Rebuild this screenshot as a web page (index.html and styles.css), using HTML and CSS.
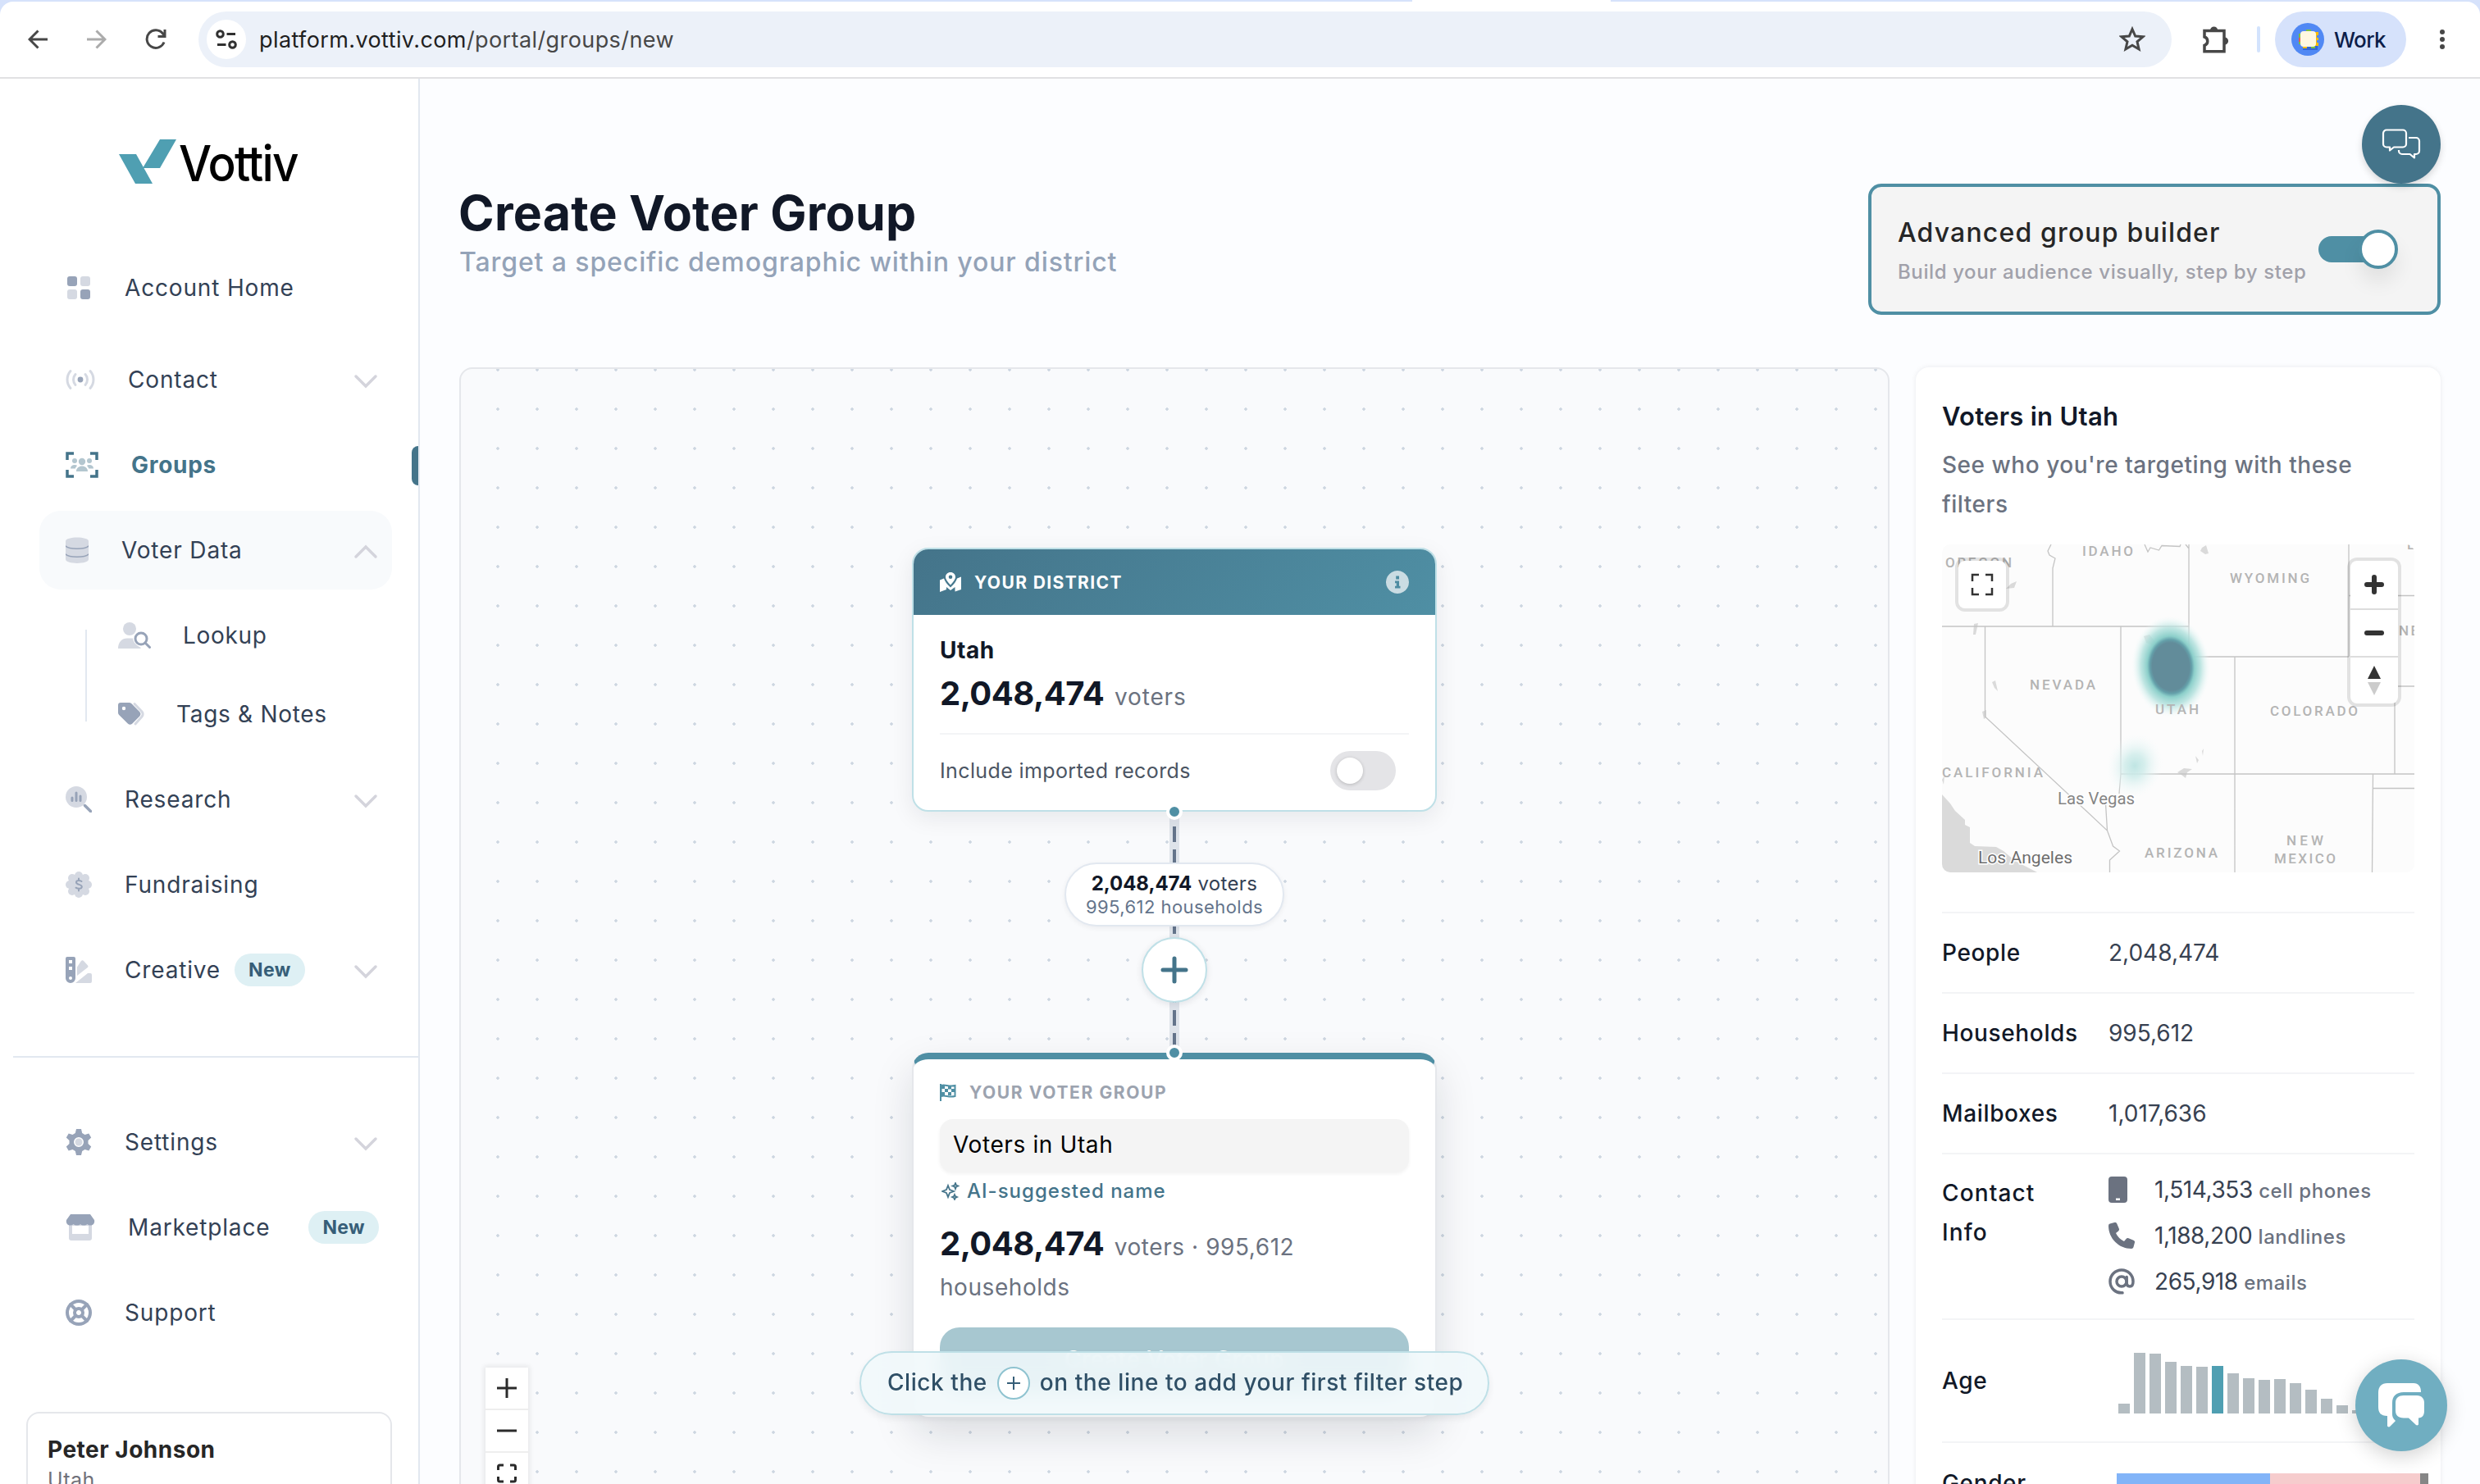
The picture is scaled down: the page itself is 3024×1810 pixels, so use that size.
FILE: index.html
```html
<!DOCTYPE html>
<html lang="en">
<head>
  <meta charset="UTF-8">
  <title>Create Voter Group</title>
  <link rel="stylesheet" href="styles.css">
</head>
<body>

  <!-- Browser toolbar -->
  <div class="browser">
    <div class="tab"></div>
    <div class="toolbar">
      <svg class="tool back" width="24" height="24" viewBox="0 0 24 24"><path d="M24 12H2M12.500 1.500 2 12l10.500 10.500"/></svg>
      <svg class="tool forward" width="24" height="24" viewBox="0 0 24 24"><path d="M0 12h22M11.500 1.500 22 12 11.500 22.500"/></svg>
      <svg class="tool reload" width="26" height="26" viewBox="0 0 26 26"><path d="M23 16.500A10.800 10.800 0 1 1 21.500 6L24 9M24 1v8.500h-8.500"/></svg>
      <div class="address">
        <span class="site-info">
          <svg width="26" height="24" viewBox="0 0 26 24"><circle cx="5.500" cy="5.500" r="3.800"/><path d="M13.500 5.500H24M2 18.500h10.500"/><circle cx="20.500" cy="18.500" r="3.800"/></svg>
        </span>
        <span class="url"><b>platform.vottiv.com</b>/portal/groups/new</span>
        <svg class="star" width="32" height="32" viewBox="0 0 32 32"><path d="M16 3.500 19.700 12l9.300.800-7 6.100 2.100 9.100L16 23.200 7.900 28 10 18.900l-7-6.100 9.300-.800z"/></svg>
      </div>
      <svg class="puzzle" width="34" height="34" viewBox="0 0 34 34"><path d="M4 6.500h24v25.300H4v-7.500a5.400 5.400 0 0 0 0-10.300z"/><path class="knob" d="M11 6a4.600 4.600 0 0 1 9.200 0zM28.500 14.500a4.600 4.600 0 0 1 0 9.200z"/></svg>
      <span class="bar-sep"></span>
      <div class="profile">
        <svg width="40" height="40" viewBox="0 0 40 40"><circle cx="20" cy="20" r="20" fill="#5088f4"/><path fill="#3367d6" d="M14 28h18v5H14z"/><path fill="#e8604c" d="M9 18h4v5H9z"/><path fill="#7ac043" d="M9 13h4v5H9zM9 23h4v3H9zM18 8h6v4h-6zM24 28h5v3h-5z"/><path fill="#fbbc04" d="M28 11h5v4h-2v3h2v3h-2v3h2v4h-5zM14 28h5v3h-5z"/><rect x="11" y="10" width="19" height="19" rx="4" fill="#fff8e1"/></svg>
        <span>Work</span>
      </div>
      <svg class="dots" width="8" height="26" viewBox="0 0 8 26"><circle cx="4" cy="4" r="3"/><circle cx="4" cy="13" r="3"/><circle cx="4" cy="22" r="3"/></svg>
    </div>
  </div>

  <div class="app">

    <!-- Sidebar -->
    <aside class="sidebar">
      <svg class="logo" width="222" height="60" viewBox="0 0 222 60">
        <path fill="#4f9fb2" d="M0 21h21l20 36H20zM50 3h20L50 38H29z"/>
        <text x="73" y="54" textLength="145" lengthAdjust="spacingAndGlyphs">Vottiv</text>
      </svg>

      <nav class="nav">
        <a class="nav-item first">
          <svg width="32" height="32" viewBox="0 0 32 32"><rect class="dark" x="2" y="2" width="12" height="12" rx="3"/><rect class="light" x="18" y="2" width="12" height="12" rx="3"/><rect class="light" x="2" y="18" width="12" height="12" rx="3"/><rect class="dark" x="18" y="18" width="12" height="12" rx="3"/></svg>
          <span class="label">Account Home</span>
        </a>
        <a class="nav-item">
          <svg width="36" height="32" viewBox="0 0 36 32"><circle class="dark" cx="18" cy="16" r="3.400"/><path class="light-line" d="M6 5.500c-5.300 6-5.300 15 0 21M12 9.500c-3.300 3.600-3.300 9.400 0 13M24 9.500c3.300 3.600 3.300 9.400 0 13M30 5.500c5.300 6 5.300 15 0 21"/></svg>
          <span class="label">Contact</span>
          <svg class="chevron" width="32" height="20" viewBox="0 0 32 20"><path d="m4 4 12 12L28 4"/></svg>
        </a>
        <a class="nav-item active">
          <svg width="40" height="32" viewBox="0 0 40 32"><path class="frame" d="M2 10V2h8M30 2h8v8M38 22v8h-8M10 30H2v-8"/><g class="people"><circle cx="11" cy="11" r="3"/><circle cx="29" cy="11" r="3"/><circle cx="20" cy="12" r="4.200"/><path d="M13 24c0-4 3-6.500 7-6.500s7 2.500 7 6.500zM6 20.500c0-3 2-4.500 5-4.500 1.300 0 2.400.300 3.200 1-1.300 1-2 2.200-2.400 3.500zM34 20.500c0-3-2-4.500-5-4.500-1.300 0-2.400.300-3.200 1 1.300 1 2 2.200 2.400 3.500z"/></g></svg>
          <span class="label">Groups</span>
        </a>
        <a class="nav-item open">
          <svg width="28" height="32" viewBox="0 0 28 32"><path class="light" d="M0 5c0-6 28-6 28 0v22c0 6.500-28 6.500-28 0z"/><path class="dark-line thin" d="M0 11c4 4.200 24 4.200 28 0M0 21c4 4.200 24 4.200 28 0"/></svg>
          <span class="label">Voter Data</span>
          <svg class="chevron" width="32" height="20" viewBox="0 0 32 20"><path d="M4 16 16 4l12 12"/></svg>
        </a>
        <div class="sub-nav">
          <a class="sub-item">
            <svg width="40" height="32" viewBox="0 0 40 32"><circle class="light" cx="14" cy="8" r="8"/><path class="light" d="M0 32c0-8 5-12.500 11-12.500h7c.500 5 4.500 9 10 11.500-.500.700-1 1-2 1z"/><circle class="dark-line" cx="28" cy="20" r="7"/><path class="dark-line" d="m33 25 5.500 5.500"/></svg>
            <span class="label">Lookup</span>
          </a>
          <a class="sub-item">
            <svg width="32" height="32" viewBox="0 0 32 32"><path class="light-line" d="m20 3.500 9 9.500a4.500 4.500 0 0 1 0 6l-8 9"/><path class="dark" fill-rule="evenodd" d="M0 5a3 3 0 0 1 3-3h10.500c1 0 2 .400 2.700 1.100l9.900 10a4 4 0 0 1 0 5.600l-8.700 8.700a4 4 0 0 1-5.600 0L1.200 17.100A4 4 0 0 1 0 14.300zm7 1.800a2.200 2.200 0 1 0 .01 4.400A2.200 2.200 0 0 0 7 6.800z"/></svg>
            <span class="label">Tags &amp; Notes</span>
          </a>
        </div>
        <a class="nav-item">
          <svg width="32" height="32" viewBox="0 0 32 32"><circle class="light" cx="13" cy="13" r="13"/><path class="dark-line" d="M8 14v3.500M13 8v9.500M18 12v5.500"/><path class="dark-line thick" d="m23.500 23.500 7 7"/></svg>
          <span class="label">Research</span>
          <svg class="chevron" width="32" height="20" viewBox="0 0 32 20"><path d="m4 4 12 12L28 4"/></svg>
        </a>
        <a class="nav-item">
          <svg width="32" height="32" viewBox="0 0 32 32"><g class="light"><circle cx="16" cy="16" r="12.500"/><circle cx="16" cy="5" r="5"/><circle cx="24" cy="8" r="5"/><circle cx="27" cy="16" r="5"/><circle cx="24" cy="24" r="5"/><circle cx="16" cy="27" r="5"/><circle cx="8" cy="24" r="5"/><circle cx="5" cy="16" r="5"/><circle cx="8" cy="8" r="5"/></g><path class="dark-line slim" d="M19.500 12c-2-1.300-6.500-1.500-6.500 1.200 0 3.300 6.800 2 6.800 5.300 0 3-5 2.700-7.300 1.200M16 8.500v2.500M16 21v2.500"/></svg>
          <span class="label">Fundraising</span>
        </a>
        <a class="nav-item">
          <svg width="32" height="32" viewBox="0 0 32 32"><path class="light" d="M14 12.500 19 5c1-1 2-1 3 0l5 5.500c.800 1 .600 2-.500 2.800L14 23zM30 20a2 2 0 0 1 2 2v8a2 2 0 0 1-2 2H12l15-12z"/><path class="dark" fill-rule="evenodd" d="M2 0h8a2 2 0 0 1 2 2v24a6 6 0 0 1-12 0V2a2 2 0 0 1 2-2zm2 4v4h4V4zm0 8v4h4v-4zm2 12a2 2 0 1 0 .01 4A2 2 0 0 0 6 24z"/></svg>
          <span class="label">Creative</span>
          <span class="badge">New</span>
          <svg class="chevron" width="32" height="20" viewBox="0 0 32 20"><path d="m4 4 12 12L28 4"/></svg>
        </a>
      </nav>

      <nav class="nav secondary">
        <a class="nav-item">
          <svg width="32" height="32" viewBox="0 0 32 32"><path class="dark" fill-rule="evenodd" d="M13 0h6l1.200 5 3.300 1.900L28.300 5.400l2.900 5.200-3.700 3.500v3.800l3.700 3.500-2.900 5.200-4.800-1.500-3.300 1.900L19 32h-6l-1.200-5-3.300-1.900-4.800 1.500-2.900-5.200 3.700-3.500v-3.800L.8 10.600l2.900-5.200 4.800 1.500L11.800 5zm3 10a6 6 0 1 0 .01 12A6 6 0 0 0 16 10z"/><circle class="light" cx="16" cy="16" r="4.500"/></svg>
          <span class="label">Settings</span>
          <svg class="chevron" width="32" height="20" viewBox="0 0 32 20"><path d="m4 4 12 12L28 4"/></svg>
        </a>
        <a class="nav-item">
          <svg width="36" height="32" viewBox="0 0 36 32"><path class="light" fill-rule="evenodd" d="M4 12h28v17a3 3 0 0 1-3 3H7a3 3 0 0 1-3-3zm4 2v10h20V14z"/><path class="dark" d="M6 0h24l5 7c1 4-2 7-5 6.500-1.500 0-2.800-.700-3.700-1.500-2 2-6.300 2-8.300 0-2 2-6.300 2-8.300 0-.900.800-2.200 1.500-3.700 1.500C3 14 0 11 1 7z"/></svg>
          <span class="label">Marketplace</span>
          <span class="badge end">New</span>
        </a>
        <a class="nav-item">
          <svg width="32" height="32" viewBox="0 0 32 32"><circle class="dark-line wide" cx="16" cy="16" r="14"/><circle class="dark-line wide" cx="16" cy="16" r="5"/><path class="dark-line wide" d="m6 6 6.500 6.500M26 6l-6.500 6.500M6 26l6.500-6.500M26 26l-6.500-6.500"/></svg>
          <span class="label">Support</span>
        </a>
      </nav>

      <div class="account">
        <div class="account-name">Peter Johnson</div>
        <div class="account-state">Utah</div>
      </div>
    </aside>

    <!-- Main content -->
    <main class="main">
      <header class="page-head">
        <div class="heading">
          <h1>Create Voter Group</h1>
          <p>Target a specific demographic within your district</p>
        </div>
        <div class="mode-card">
          <div>
            <div class="mode-title">Advanced group builder</div>
            <div class="mode-text">Build your audience visually, step by step</div>
          </div>
          <span class="mode-switch"><i></i></span>
        </div>
        <span class="feedback">
          <svg width="48" height="38" viewBox="0 0 48 38"><path d="M6 1.500h20a4 4 0 0 1 4 4v13a4 4 0 0 1-4 4H15l-5 4v-4H6a4 4 0 0 1-4-4v-13a4 4 0 0 1 4-4zM33 11h9a4 4 0 0 1 4 4v12a4 4 0 0 1-4 4h-2v4.500L34.500 31H25a4 4 0 0 1-4-4v-1"/></svg>
        </span>
      </header>

      <div class="workspace">
        <section class="canvas">
          <svg class="edge" width="12" height="290" viewBox="0 0 12 290"><path class="edge-halo" d="M6 0v290"/><path class="edge-dash" d="M6 18v272"/></svg>

          <div class="node district">
            <div class="node-head">
              <svg width="26" height="24" viewBox="0 0 26 24"><path d="M0 9.500 5 7.500c1 3.500 3.500 6.500 8 11 4.500-4.500 7-7.500 8-11l5-2v15.500L18.500 23.500V18L13 22l-5-4v3L0 24z"/><path fill-rule="evenodd" d="M13 0c3.600 0 6 2.500 6 5.800 0 3-3 6.500-6 9.700-3-3.200-6-6.700-6-9.700C7 2.500 9.400 0 13 0zm0 3.500a2.300 2.300 0 1 0 .01 4.600A2.300 2.300 0 0 0 13 3.500z"/></svg>
              <span>YOUR DISTRICT</span>
              <svg class="info" width="28" height="28" viewBox="0 0 28 28"><path fill-rule="evenodd" d="M14 0a14 14 0 1 1-.01 0zm-1.800 6.500v4h3.800v-4zm-1.200 6v2.700h1.700v3.600H11v2.700h6.500v-2.700H16v-6.300z"/></svg>
            </div>
            <div class="node-body">
              <div class="place">Utah</div>
              <div class="count"><b>2,048,474</b> voters</div>
              <div class="include">
                <span>Include imported records</span>
                <span class="switch"><i></i></span>
              </div>
            </div>
          </div>
          <span class="handle out"></span>

          <div class="edge-label">
            <div><b>2,048,474</b> voters</div>
            <small>995,612 households</small>
          </div>
          <span class="add-step">
            <svg width="34" height="34" viewBox="0 0 34 34"><path d="M17 3v28M3 17h28"/></svg>
          </span>

          <div class="node result">
            <div class="result-head">
              <svg width="20" height="22" viewBox="0 0 20 22"><path d="M1 1v21M1.500 3c5-2 9 2 17 0v13c-8 2-12-2-17 0z" fill="none" stroke="#4f8fa4" stroke-width="2"/><path fill="#4f8fa4" d="M2 3h4v4H2zM10 3.500h4v4h-4zM6 7h4v4H6zM14 7h4v4h-4zM2 11h4v4H2zM10 11h4v4h-4z"/></svg>
              <span>YOUR VOTER GROUP</span>
            </div>
            <div class="name-input">Voters in Utah</div>
            <div class="ai-note">
              <svg width="22" height="22" viewBox="0 0 22 22"><path d="m8 4 2 5 5 2-5 2-2 5-2-5-5-2 5-2zM17 1l1 2.500L20.500 4.500 18 5.500 17 8l-1-2.500-2.500-1L16 3.500zM16 15l.900 2 2.100 1-2.100 1-.900 2-.900-2-2.100-1 2.100-1z"/></svg>
              <span>AI-suggested name</span>
            </div>
            <div class="count"><b>2,048,474</b> voters · 995,612 households</div>
            <div class="create-btn">Create Voter Group</div>
          </div>
          <span class="handle in"></span>

          <div class="hint">
            <span>Click the</span>
            <svg width="40" height="40" viewBox="0 0 40 40"><circle cx="20" cy="20" r="19"/><path d="M20 12v16M12 20h16"/></svg>
            <span>on the line to add your first filter step</span>
          </div>

          <div class="zoom-controls">
            <span><svg width="24" height="24" viewBox="0 0 24 24"><path d="M12 0v24M0 12h24"/></svg></span>
            <span><svg width="24" height="24" viewBox="0 0 24 24"><path d="M0 12h24"/></svg></span>
            <span><svg width="24" height="24" viewBox="0 0 24 24"><path d="M1.500 8V4q0-2 2-2H8M16 2h4.500q2 0 2 2v4M22.500 16v4q0 2-2 2H16M8 22H3.500q-2 0-2-2v-4"/></svg></span>
          </div>
        </section>

        <!-- Targeting summary -->
        <section class="summary">
          <h2>Voters in Utah</h2>
          <p class="summary-text">See who you're targeting with these filters</p>

          <div class="map">
            <svg width="576" height="400" viewBox="0 0 576 400">
              <defs>
                <radialGradient id="heat">
                  <stop offset="0" stop-color="#628c9a"/>
                  <stop offset=".47" stop-color="#628c9a"/>
                  <stop offset=".53" stop-color="#64a0aa"/>
                  <stop offset=".6" stop-color="#8ccfca"/>
                  <stop offset=".76" stop-color="#b0e0dc" stop-opacity=".8"/>
                  <stop offset=".88" stop-color="#d4efed" stop-opacity=".45"/>
                  <stop offset="1" stop-color="#f5fbfc" stop-opacity="0"/>
                </radialGradient>
                <radialGradient id="heat-soft">
                  <stop offset="0" stop-color="#bfe5e3"/>
                  <stop offset=".35" stop-color="#cfecea" stop-opacity=".85"/>
                  <stop offset="1" stop-color="#f5fbfc" stop-opacity="0"/>
                </radialGradient>
              </defs>
              <rect width="576" height="400" fill="#fcfcfc"/>
              <path class="water" d="M0 305l10 11 6 9 12 11v6l6 3v19l6 4 26 1 9 5 14 12 27 14H0z"/>
              <path class="water" d="M317 4l5-3 3 10-4 1-6-4zM84 48l7-3-3 8-10 1zM39 97l5-1-3 14h-3zM61 168l4-2 3 13-4-4zM49 204l5-2v9l-3 2zM0 287l3-5-1 11zM287 278l8-5 10 1-6 4-2 7-5-4zM309 258l4 5-2 4zM317 252l2-3-1 9zM246 112l7-2 8 10 4-2 8 16-6 12-8-14-4-10-6-2z"/>
              <path class="border" d="M0 100h301M52.500 100v110l149 139 7 19 8 6-12 11v15M133 0l-4 8 2 5 7 4-3 12v71M218 100v180l-2 24M199.500 316l2 33M301 0v137h195M496 0v137M247 0l4 9 3-5 10.500 3 3.500-5.500 22 1 1-2.500M297 0l4 5M357 137v263M218 280h358M552 193v87M552 173h24M496 62.500h80M525.500 280l-1 120M526 297.500h50"/>
              <ellipse cx="279" cy="149" rx="48" ry="62" fill="url(#heat)" transform="rotate(-4 279 149)"/>
              <ellipse cx="235" cy="270" rx="34" ry="40" fill="url(#heat-soft)" transform="rotate(15 235 270)"/>
              <g class="state">
                <text x="4" y="28" textLength="81">OREGON</text>
                <text x="171" y="14" textLength="62">IDAHO</text>
                <text x="351" y="47" textLength="97">WYOMING</text>
                <text x="107" y="177" textLength="80">NEVADA</text>
                <text x="260" y="207" textLength="53">UTAH</text>
                <text x="400" y="209" textLength="107">COLORADO</text>
                <text x="0" y="284" textLength="123">CALIFORNIA</text>
                <text x="247" y="382" textLength="89">ARIZONA</text>
                <text x="420" y="367" textLength="45">NEW</text>
                <text x="405" y="389" textLength="75">MEXICO</text>
                <text x="557" y="111" textLength="24">NE</text>
                <text x="567" y="6">L</text>
              </g>
              <g class="city">
                <text x="141" y="317" textLength="94" lengthAdjust="spacingAndGlyphs">Las Vegas</text>
                <text class="big" x="44" y="389" textLength="115" lengthAdjust="spacingAndGlyphs">Los Angeles</text>
              </g>
            </svg>
            <span class="map-btn full"><svg width="28" height="28" viewBox="0 0 28 28"><path d="M2 10V2h8M18 2h8v8M26 18v8h-8M10 26H2v-8"/></svg></span>
            <div class="map-zoom">
              <span><svg width="28" height="28" viewBox="0 0 28 28"><path class="bold" d="M14 5v18M5 14h18"/></svg></span>
              <span><svg width="28" height="28" viewBox="0 0 28 28"><path class="bold" d="M5 14h18"/></svg></span>
              <span><svg class="compass" width="28" height="40" viewBox="0 0 28 40"><path fill="#333" d="M14 2l8 16H6z"/><path fill="#ccc" d="M14 38l8-16H6z"/></svg></span>
            </div>
          </div>

          <div class="stats">
            <div class="stat"><span class="key">People</span><span>2,048,474</span></div>
            <div class="stat"><span class="key">Households</span><span>995,612</span></div>
            <div class="stat"><span class="key">Mailboxes</span><span>1,017,636</span></div>
            <div class="stat contact">
              <span class="key">Contact<br>Info</span>
              <div class="channels">
                <div class="channel">
                  <svg width="32" height="32" viewBox="0 0 32 32"><path fill-rule="evenodd" d="M4 0h15a4 4 0 0 1 4 4v24a4 4 0 0 1-4 4H4a4 4 0 0 1-4-4V4a4 4 0 0 1 4-4zm5 26.500v2.500h5v-2.500z"/></svg>
                  <span>1,514,353 <small>cell phones</small></span>
                </div>
                <div class="channel">
                  <svg width="32" height="32" viewBox="0 0 32 32"><path d="M10.300 1.500a2.500 2.500 0 0 0-3-1.400L1.800 1.600A2.500 2.500 0 0 0 0 4c0 15.500 12.500 28 28 28a2.500 2.500 0 0 0 2.400-1.800l1.500-5.500a2.500 2.500 0 0 0-1.400-3l-6-2.500a2.500 2.500 0 0 0-2.900.7L19 23A21 21 0 0 1 9 13l3.100-2.600a2.500 2.500 0 0 0 .7-2.900z"/></svg>
                  <span>1,188,200 <small>landlines</small></span>
                </div>
                <div class="channel">
                  <svg width="32" height="32" viewBox="0 0 32 32"><path class="at" d="M17 29.800C9 30.500 2 24.500 2 16a14 14 0 0 1 28 0c0 3.500-1 6-4 6s-3.800-2-3.800-4.500V10.500"/><circle class="at" cx="16" cy="16" r="6"/></svg>
                  <span>265,918 <small>emails</small></span>
                </div>
              </div>
            </div>
            <div class="stat age">
              <span class="key">Age</span>
              <div class="bars">
                <i style="height:12px"></i><i style="height:74px"></i><i style="height:73px"></i><i style="height:63px"></i><i style="height:58px"></i><i style="height:57px"></i><i class="current" style="height:58px"></i><i style="height:49px"></i><i style="height:43px"></i><i style="height:41px"></i><i style="height:42px"></i><i style="height:37px"></i><i style="height:29px"></i><i style="height:18px"></i><i style="height:10px"></i><i style="height:4px"></i>
              </div>
            </div>
            <div class="stat gender">
              <span class="key">Gender</span>
              <div class="split"><i class="male"></i><i class="female"></i><i class="unknown"></i></div>
            </div>
          </div>
        </section>
      </div>
    </main>
  </div>

  <span class="chat">
    <svg width="58" height="54" viewBox="0 0 58 54"><path d="M12 0h32c6 0 9 4 9 11H32c-9 0-14 5-14 13v14c0 3 1 5 4 8l-7 7c-1 1-3 0-3-1V40C4 40 1 36 1 29V12C1 4 5 0 12 0z"/><path d="M32 15h16c6 0 9 4 9 9v10c0 5-2 8-7 8.500V50c0 1-1.500 2-3 1l-9-8.500h-6c-7 0-10-3.500-10-9V24c0-6 4-9 10-9z"/></svg>
  </span>

</body>
</html>
```

FILE: styles.css
```css
* {
  box-sizing: border-box;
}

body {
  margin: 0;
  width: 3024px;
  height: 1810px;
  overflow: hidden;
  background: #fcfdff;
  font-family: Inter, "Liberation Sans", sans-serif;
  font-size: 28px;
  letter-spacing: 0.02em;
  color: #334155;
}

h1, h2, p {
  margin: 0;
}

svg {
  display: block;
  flex-shrink: 0;
}

/* Browser toolbar */
.browser {
  height: 96px;
  background: #d6e2fb;
}

.tab {
  width: 242px;
  height: 2px;
  margin-left: 1722px;
  background: #fff;
}

.toolbar {
  height: 94px;
  display: flex;
  align-items: center;
  padding-left: 34px;
  background: #fff;
  border-bottom: 2px solid #e1e1e3;
  border-radius: 16px 16px 0 0;
}

.tool {
  fill: none;
  stroke: #474747;
  stroke-width: 3;
}

.forward {
  margin-left: 48px;
  stroke: #ababab;
}

.reload {
  margin-left: 47px;
}

.address {
  width: 2406px;
  height: 68px;
  margin-left: 39px;
  padding: 0 32px 0 10px;
  display: flex;
  align-items: center;
  border-radius: 34px;
  background: #ecf1f9;
}

.site-info {
  width: 48px;
  height: 48px;
  display: flex;
  align-items: center;
  justify-content: center;
  border-radius: 50%;
  background: #fff;
}

.site-info svg {
  fill: none;
  stroke: #303030;
  stroke-width: 3;
}

.url {
  flex: 1;
  margin-left: 16px;
  font-size: 27px;
  letter-spacing: 0.015em;
  color: #474747;
}

.url b {
  font-weight: 400;
  color: #1f1f1f;
}

.star {
  fill: none;
  stroke: #474747;
  stroke-width: 3;
}

.puzzle {
  margin-left: 36px;
  fill: none;
  stroke: #474747;
  stroke-width: 3.5;
}

.puzzle .knob {
  fill: #474747;
  stroke: none;
}

.bar-sep {
  width: 4px;
  height: 32px;
  margin: 0 18px 0 34px;
  border-radius: 2px;
  background: #d3e3fd;
}

.profile {
  width: 160px;
  height: 68px;
  padding-left: 20px;
  display: flex;
  align-items: center;
  gap: 12px;
  border-radius: 34px;
  background: #d6e2fb;
  font-size: 26px;
  font-weight: 500;
  letter-spacing: -0.025em;
  color: #0c1d49;
}

.dots {
  margin-left: 40px;
  fill: #474747;
}

.app {
  display: flex;
  height: 1714px;
}

/* Sidebar */
.sidebar {
  width: 512px;
  flex-shrink: 0;
  background: #fff;
  border-right: 2px solid #e2e8f0;
}

.logo {
  margin: 71px 0 0 145px;
  overflow: visible;
}

.logo text {
  font-size: 60px;
  font-weight: 500;
  letter-spacing: -0.03em;
  fill: #000;
}

.nav {
  padding: 76px 0 0 48px;
}

.nav.secondary {
  margin: 57px 0 0 16px;
  padding: 55px 0 0 32px;
  border-top: 2px solid #e2e8f0;
}

.nav-item {
  position: relative;
  width: 430px;
  height: 96px;
  margin-bottom: 8px;
  padding: 0 16px 0 32px;
  display: flex;
  align-items: center;
  border-radius: 26px;
}

.nav-item.first {
  margin-bottom: 16px;
}

.nav-item.open {
  background: #f8fafc;
}

.label {
  margin-left: 40px;
  letter-spacing: 0.03em;
}

.sub-item .label {
  margin-left: 39px;
  letter-spacing: 0.025em;
}

.nav-item.active .label {
  font-weight: 700;
  letter-spacing: 0.025em;
  color: #44748a;
}

.nav-item.active::after {
  content: "";
  position: absolute;
  top: 25px;
  right: -32px;
  width: 8px;
  height: 48px;
  border-radius: 8px 0 0 8px;
  background: #44748a;
}

.light {
  fill: #d5d9e2;
}

.dark {
  fill: #97a3b8;
}

.light-line,
.dark-line {
  fill: none;
  stroke: #d5d9e2;
  stroke-width: 3;
  stroke-linecap: round;
}

.dark-line {
  stroke: #97a3b8;
}

.thin {
  stroke-width: 1.5;
}

.slim {
  stroke-width: 2;
}

.thick {
  stroke-width: 3.5;
}

.wide {
  stroke-width: 4;
}

.frame {
  fill: none;
  stroke: #44748a;
  stroke-width: 3.5;
}

.people {
  fill: #b3c6cf;
}

.chevron {
  margin-left: auto;
  position: relative;
  top: 2px;
  fill: none;
  stroke: #d4d4dc;
  stroke-width: 3.5;
  stroke-linecap: round;
}

.badge {
  height: 40px;
  margin-left: 17px;
  padding: 0 17px;
  border-radius: 20px;
  background: #def0f4;
  font-size: 23px;
  font-weight: 700;
  line-height: 40px;
  letter-spacing: 0.015em;
  color: #365e78;
}

.badge.end {
  margin-left: auto;
}

.sub-nav {
  position: relative;
  margin-bottom: 8px;
  padding-left: 96px;
}

.sub-nav::before {
  content: "";
  position: absolute;
  left: 56px;
  top: 41px;
  width: 2px;
  height: 112px;
  background: #e2e8f0;
}

.sub-item {
  height: 96px;
  display: flex;
  align-items: center;
}

.account {
  width: 446px;
  height: 160px;
  margin: 73px 0 0 32px;
  padding: 23px 24px;
  border: 2px solid #e5e7eb;
  border-radius: 16px;
}

.account-name {
  font-weight: 700;
  line-height: 42px;
  letter-spacing: 0.018em;
  color: #262626;
}

.account-state {
  font-size: 25px;
  line-height: 32px;
  color: #71717a;
}

/* Page header */
.main {
  flex: 1;
  padding: 128px 48px 0;
}

.page-head {
  position: relative;
  height: 160px;
  display: flex;
  justify-content: space-between;
}

.heading {
  padding-top: 2px;
}

h1 {
  margin-left: -1px;
  font-size: 59px;
  font-weight: 700;
  line-height: 68px;
  letter-spacing: 0.004em;
  color: #111827;
}

.heading p {
  margin-top: 2px;
  font-size: 32px;
  font-weight: 500;
  line-height: 48px;
  letter-spacing: 0.028em;
  color: #94a3b8;
}

.mode-card {
  width: 698px;
  height: 160px;
  padding: 33px 48px 0 32px;
  display: flex;
  justify-content: space-between;
  border: 4px solid #4f8fa4;
  border-radius: 16px;
  background: #f4f4f4;
}

.mode-title {
  font-size: 32px;
  font-weight: 500;
  line-height: 46px;
  letter-spacing: 0.036em;
  color: #262626;
}

.mode-text {
  margin-top: 5px;
  font-size: 24px;
  font-weight: 500;
  line-height: 40px;
  letter-spacing: 0.025em;
  color: #a1a1aa;
}

.mode-switch {
  width: 97px;
  height: 48px;
  margin-top: 19px;
  padding: 8px 0;
}

.mode-switch::before {
  content: "";
  display: block;
  height: 32px;
  margin-right: 10px;
  border-radius: 16px;
  background: #4f8fa4;
}

.mode-switch i {
  display: block;
  width: 48px;
  height: 48px;
  margin: -40px 0 0 auto;
  border: 4px solid #4f8fa4;
  border-radius: 50%;
  background: #fff;
  box-shadow: 0 16px 24px rgba(0, 0, 0, 0.08);
}

.feedback {
  position: absolute;
  right: 0;
  top: -96px;
  width: 96px;
  height: 96px;
  display: flex;
  align-items: center;
  justify-content: center;
  border-radius: 50%;
  background: #44748a;
  box-shadow: 0 4px 8px rgba(0, 0, 0, 0.15);
}

.feedback svg {
  fill: none;
  stroke: #fff;
  stroke-width: 2.2;
  stroke-linejoin: round;
}

/* Flow canvas */
.workspace {
  display: flex;
  gap: 32px;
  margin-top: 64px;
}

.canvas {
  position: relative;
  width: 1744px;
  height: 1500px;
  border: 2px solid #e5e7eb;
  border-radius: 16px;
  background: #f9fafc radial-gradient(circle, #cdd6e1 1.5px, transparent 1.9px) 21px -23px / 48px 48px;
}

.edge {
  position: absolute;
  left: 864px;
  top: 540px;
}

.edge-halo {
  stroke: #dee3ea;
  stroke-width: 12;
}

.edge-dash {
  stroke: #64748b;
  stroke-width: 4;
  stroke-dasharray: 19 9;
}

.node {
  position: absolute;
  left: 550px;
  width: 640px;
  border-radius: 20px;
  background: #fff;
}

.district {
  top: 218px;
  height: 322px;
  border: 2px solid #bfe0e7;
  box-shadow: 0 8px 28px rgba(15, 23, 42, 0.08);
}

.node-head {
  height: 80px;
  padding: 0 32px;
  display: flex;
  align-items: center;
  border-radius: 18px 18px 0 0;
  background: linear-gradient(135deg, #44748a, #4f8fa4);
  fill: #fff;
  font-size: 21px;
  font-weight: 700;
  letter-spacing: 0.066em;
  color: #fff;
}

.node-head span {
  margin-left: 16px;
}

.node-head .info {
  margin-left: auto;
  opacity: 0.7;
}

.node-body {
  padding: 21px 32px 0;
}

.place {
  font-size: 28px;
  font-weight: 700;
  line-height: 44px;
  letter-spacing: 0.02em;
  color: #111827;
}

.count {
  font-size: 28px;
  line-height: 48px;
  letter-spacing: 0.02em;
  color: #6b7280;
}

.count b {
  margin-right: 4px;
  font-size: 40px;
  font-weight: 700;
  letter-spacing: -0.013em;
  color: #111827;
}

.district .count {
  margin-top: 5px;
  line-height: 52px;
  letter-spacing: 0.03em;
}

.include {
  margin-top: 18px;
  padding: 20px 16px 0 0;
  display: flex;
  align-items: center;
  justify-content: space-between;
  border-top: 2px solid #f3f4f6;
  font-size: 25px;
  letter-spacing: 0.015em;
  color: #4b5563;
}

.switch {
  width: 80px;
  height: 48px;
  padding: 8px;
  border-radius: 24px;
  background: #e4e4e7;
}

.switch i {
  display: block;
  width: 32px;
  height: 32px;
  border-radius: 50%;
  background: #fff;
  box-shadow: 0 1px 4px rgba(0, 0, 0, 0.2);
}

.handle {
  position: absolute;
  left: 860px;
  width: 20px;
  height: 20px;
  border: 4px solid #fff;
  border-radius: 50%;
  background: #4f8fa4;
}

.handle.out {
  top: 530px;
}

.handle.in {
  top: 824px;
}

.edge-label {
  position: absolute;
  left: 736px;
  top: 602px;
  width: 268px;
  height: 78px;
  padding-top: 9px;
  border: 2px solid #e2e8f0;
  border-radius: 39px;
  background: #fff;
  box-shadow: 0 2px 6px rgba(15, 23, 42, 0.06);
  font-size: 24px;
  line-height: 29px;
  letter-spacing: 0.015em;
  text-align: center;
}

.edge-label b {
  color: #111827;
  letter-spacing: -0.002em;
}

.edge-label small {
  display: block;
  font-size: 22px;
  line-height: 28px;
  letter-spacing: 0.02em;
  color: #64748b;
}

.add-step {
  position: absolute;
  left: 830px;
  top: 693px;
  width: 80px;
  height: 80px;
  display: flex;
  align-items: center;
  justify-content: center;
  border: 2px solid #bfe0e7;
  border-radius: 50%;
  background: #fff;
  box-shadow: 0 2px 8px rgba(15, 23, 42, 0.1);
}

.add-step svg {
  stroke: #44748a;
  stroke-width: 5;
  stroke-linecap: round;
}

.result {
  top: 834px;
  height: 446px;
  padding: 22px 32px 0;
  border: 2px solid #e5e7eb;
  border-top: 8px solid #4f8fa4;
  box-shadow: 0 20px 50px rgba(15, 23, 42, 0.13);
}

.result-head {
  height: 36px;
  display: flex;
  align-items: center;
  gap: 16px;
  font-size: 21px;
  font-weight: 700;
  letter-spacing: 0.077em;
  color: #9ca3af;
}

.name-input {
  height: 65px;
  margin-top: 15px;
  padding-left: 16px;
  border-radius: 16px;
  background: #f4f4f4;
  box-shadow: 0 2px 4px rgba(0, 0, 0, 0.05);
  line-height: 62px;
  letter-spacing: 0.022em;
  color: #000;
}

.ai-note {
  height: 45px;
  padding-left: 2px;
  display: flex;
  align-items: center;
  gap: 9px;
  font-size: 24px;
  font-weight: 500;
  letter-spacing: 0.042em;
  color: #44748a;
}

.ai-note svg {
  fill: none;
  stroke: #44748a;
  stroke-width: 1.8;
}

.result .count {
  margin-top: 17px;
  line-height: 49px;
}

.create-btn {
  height: 80px;
  margin-top: 24px;
  border-radius: 24px;
  background: #a7c7d0;
  font-weight: 500;
  line-height: 79px;
  text-align: center;
  color: #fff;
}

.hint {
  position: absolute;
  left: 486px;
  top: 1198px;
  width: 768px;
  height: 78px;
  padding-left: 32px;
  display: flex;
  align-items: center;
  border: 2px solid #bfe0e7;
  border-radius: 39px;
  background: rgba(240, 248, 251, 0.88);
  backdrop-filter: blur(12px);
  box-shadow: 0 4px 8px rgba(15, 23, 42, 0.07);
  font-weight: 500;
  letter-spacing: 0.02em;
  white-space: nowrap;
  color: #2f4f66;
}

.hint span {
  padding-bottom: 2px;
}

.hint svg {
  margin: 0 12px;
  fill: #fff;
  stroke: #8fc3d0;
  stroke-width: 2;
}

.hint svg path {
  stroke: #365e78;
}

.zoom-controls {
  position: absolute;
  left: 30px;
  top: 1218px;
  width: 52px;
  background: #eee;
  box-shadow: 0 0 6px 2px rgba(0, 0, 0, 0.08);
}

.zoom-controls span {
  height: 50px;
  margin-bottom: 2px;
  display: flex;
  align-items: center;
  justify-content: center;
  background: #fff;
}

.zoom-controls svg {
  fill: none;
  stroke: #2b2b2b;
  stroke-width: 3;
}

/* Targeting summary */
.summary {
  width: 640px;
  height: 1500px;
  padding: 40px 32px 0;
  border-radius: 16px;
  background: #fff;
  box-shadow: 0 0 6px rgba(15, 23, 42, 0.08);
}

h2 {
  font-size: 31px;
  font-weight: 600;
  line-height: 40px;
  letter-spacing: 0.009em;
  color: #111827;
}

.summary-text {
  margin-top: 15px;
  font-weight: 500;
  line-height: 48px;
  letter-spacing: 0.019em;
  color: #6b7280;
}

.map {
  position: relative;
  height: 400px;
  margin-top: 25px;
  border-radius: 10px;
  overflow: hidden;
}

.water {
  fill: #dadada;
}

.border {
  fill: none;
  stroke: #c4c4c4;
  stroke-width: 1.3;
}

.state {
  font-family: Roboto, sans-serif;
  font-size: 17px;
  font-weight: 500;
  letter-spacing: 0;
  fill: #b4b4b4;
}

.city {
  font-family: Roboto, sans-serif;
  font-size: 21px;
  letter-spacing: 0;
  fill: #858585;
  stroke: #fff;
  stroke-width: 3;
  paint-order: stroke;
}

.city .big {
  fill: #6e6e6e;
}

.map-btn,
.map-zoom {
  position: absolute;
  top: 20px;
  width: 58px;
  border-radius: 8px;
  background: #fff;
  box-shadow: 0 0 0 4px rgba(0, 0, 0, 0.1);
}

.map-btn.full {
  left: 20px;
  height: 58px;
  display: flex;
  align-items: center;
  justify-content: center;
}

.map-zoom {
  right: 20px;
}

.map-zoom span {
  height: 58px;
  display: flex;
  align-items: center;
  justify-content: center;
}

.map-zoom span + span {
  border-top: 2px solid #ddd;
}

.map-btn svg,
.map-zoom svg {
  fill: none;
  stroke: #333;
  stroke-width: 2.5;
}

.map-zoom .compass {
  stroke: none;
}

.map-zoom .bold {
  stroke-width: 6;
  stroke-linecap: round;
}

.stats {
  margin-top: 48px;
}

.stat {
  height: 98px;
  display: flex;
  align-items: center;
  border-top: 2px solid #f3f4f6;
  letter-spacing: 0;
  color: #374151;
}

.key {
  width: 203px;
  flex-shrink: 0;
  font-weight: 500;
  line-height: 48px;
  letter-spacing: 0.023em;
  color: #111827;
}

.stat.contact {
  height: 202px;
  align-items: flex-start;
}

.contact .key {
  padding-top: 23px;
  letter-spacing: 0.04em;
}

.channels {
  padding-top: 15px;
}

.channel {
  height: 56px;
  display: flex;
  align-items: center;
  gap: 24px;
  fill: #6b7280;
  letter-spacing: -0.015em;
}

.channel small {
  font-size: 24px;
  font-weight: 500;
  letter-spacing: 0.022em;
  color: #6b7280;
}

.at {
  fill: none;
  stroke: #6b7280;
  stroke-width: 3.5;
  stroke-linecap: round;
}

.stat.age {
  height: 150px;
}

.bars {
  height: 74px;
  margin: 6px 0 0 12px;
  display: flex;
  align-items: flex-end;
  gap: 5px;
}

.bars i {
  width: 14px;
  background: #b4bdc2;
}

.bars .current {
  background: #4f9fb2;
}

.stat.gender {
  height: 100px;
}

.split {
  display: flex;
  flex-shrink: 0;
  height: 24px;
  margin-left: 10px;
}

.split .male {
  width: 187px;
  background: #82b4f8;
}

.split .female {
  width: 183px;
  background: #f6cccd;
}

.split .unknown {
  width: 10px;
  background: #868686;
}

/* Chat launcher */
.chat {
  position: absolute;
  left: 2872px;
  top: 1658px;
  width: 112px;
  height: 112px;
  display: flex;
  align-items: center;
  justify-content: center;
  border-radius: 50%;
  background: #70aec1;
  box-shadow: 0 6px 24px rgba(0, 0, 0, 0.18);
}

.chat svg {
  fill: #fff;
}
```
